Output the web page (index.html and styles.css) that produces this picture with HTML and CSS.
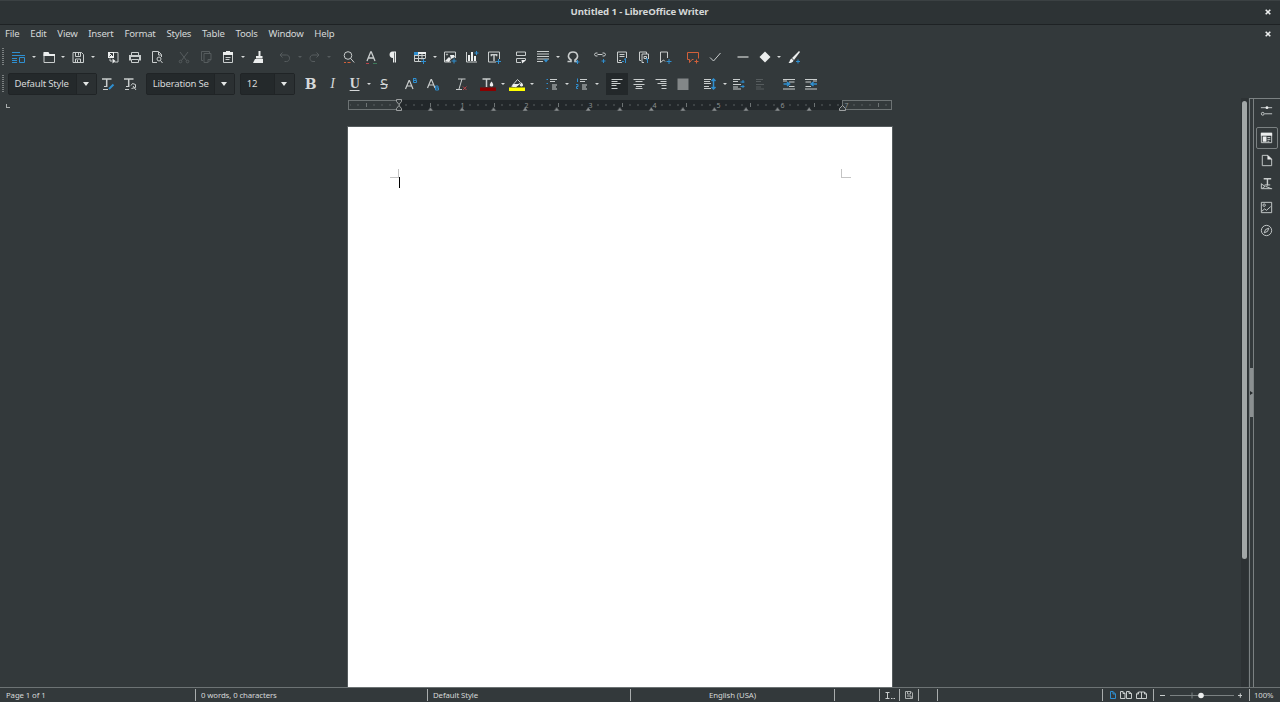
FILE: index.html
```
<!DOCTYPE html>
<html lang="en">
  <head>
    <meta charset="UTF-8" />
    <title>Untitled 1 - LibreOffice Writer</title>
    <link rel="stylesheet" href="styles.css">
  </head>
  <body>
    <div class="titlebar">
      <span class="title">Untitled 1 - LibreOffice Writer</span>
      <svg class="close" viewBox="0 0 6 6"><path d="M.7.7l4.6 4.6M5.3.7L.7 5.3"/></svg>
    </div>

    <div class="menubar">
      <span>File</span><span>Edit</span><span>View</span><span>Insert</span><span>Format</span><span>Styles</span><span>Table</span><span>Tools</span><span>Window</span><span>Help</span>
      <svg class="close" viewBox="0 0 6 6"><path d="M.7.7l4.6 4.6M5.3.7L.7 5.3"/></svg>
    </div>

    <!-- standard toolbar -->
    <div class="toolbar standard">
      <i class="grip"></i>
      <div class="btn"><svg viewBox="0 0 16 16" class="blue"><path d="M1 3.5h8M1 6.500h13M1 9.500h5M1 11.500h5M1 13.500h5M8.500 8.500h5v5h-5z"/></svg></div><i class="drop"></i>
      <div class="btn"><svg viewBox="0 0 16 16"><path d="M3 4.500v9h10.500v-7.500H3"/><path class="fill" d="M2.500 3h5l1 2h5.500v2h-11.500z"/></svg></div><i class="drop"></i>
      <div class="btn"><svg viewBox="0 0 16 16"><path d="M3 3.500h8.500l2 2v8H3zM5.500 4v3.500h5V4M5.500 13v-3h5v3"/><path d="M8.500 4v2.500M7.500 11v2"/></svg></div><i class="drop"></i>
      <i class="sep"></i>
      <div class="btn"><svg viewBox="0 0 16 16"><path d="M8 3.500h5v9.500H9.500M5 9.500v2.500h2"/><path class="fill" d="M3 3h6v6H3z"/><path class="dark" d="M4.500 7.500l3-3M5 4.500h2.500V7"/><path class="fill" d="M7.500 9.500v5l3-2.500z"/></svg></div>
      <div class="btn"><svg viewBox="0 0 16 16"><path d="M4.500 6V3.500h7V6M4.500 10.500h7v3h-7z"/><path d="M3 11.500V7h10v4.500" stroke-width="2"/></svg></div>
      <div class="btn"><svg viewBox="0 0 16 16"><path d="M8 13.500H3.500v-11h6l3 3V8M9.500 3v3h3"/><circle cx="10" cy="10" r="2"/><path d="M11.500 11.500l2 2.500"/></svg></div>
      <i class="sep"></i>
      <div class="btn off"><svg viewBox="0 0 16 16"><path d="M4 3l6.500 8.500M12 3L5.500 11.500"/><circle cx="4.500" cy="12.500" r="1.300"/><circle cx="11.500" cy="12.500" r="1.300"/></svg></div>
      <div class="btn off"><svg viewBox="0 0 16 16"><path d="M5 11.500H3.500v-9h8V4M6 4.500h7v6l-3 3H6zM13 10.500h-3v3"/></svg></div>
      <div class="btn"><svg viewBox="0 0 16 16"><path d="M3.500 4v9.500h9V4zM5.500 8.500h5M5.500 10.500h4"/><path class="fill" d="M3 3h3V2h4v1h3v3H3z"/></svg></div><i class="drop"></i>
      <div class="btn"><svg viewBox="0 0 16 16"><path class="fill" d="M8.500 2h2v5h2v2.500H6V7h2.500zM5 10h8v4H3z"/></svg></div>
      <i class="sep"></i>
      <div class="btn off"><svg viewBox="0 0 16 16"><path d="M5.500 3.500L3 6l2.500 2.500M3 6h6.500c4 0 4 6.500 0 6.500H7.500"/></svg></div><i class="drop dim"></i>
      <div class="btn off"><svg viewBox="0 0 16 16"><path d="M10.500 3.500L13 6l-2.500 2.500M13 6H7c-4 0-4 6.500 0 6.500h2"/></svg></div><i class="drop dim"></i>
      <i class="sep"></i>
      <div class="btn"><svg viewBox="0 0 16 16"><circle cx="7" cy="6.500" r="3.800"/><path d="M9.700 9.500l3.500 4"/><path class="orange" d="M3 13.500h2M6.500 13.500h3"/></svg></div>
      <div class="btn"><svg viewBox="0 0 16 16"><path stroke-width="1.300" d="M4 12L7.700 3h.6L12 12M5.500 9h5"/><path class="red" d="M3 14.500h3"/><path class="green" d="M10 14.500h4"/></svg></div>
      <div class="btn"><svg viewBox="0 0 16 16"><path class="fill" d="M7.500 2.500H11v11h-1V3.500h-.7v10H8V9C3.500 9 3.500 2.500 7.500 2.500z"/></svg></div>
      <i class="sep"></i>
      <div class="btn"><svg viewBox="0 0 16 16"><path class="bluefill" d="M2 3h4v3H2z"/><path d="M2.500 6v6.500H9M2 6.500h11.500M6.500 3.500v9M10 3.500v7M2.500 9.500h11M6.500 3.500h7V9"/><path class="fill" d="M6 3h8v2H6z"/><path class="blue" d="M9 12.500h5M11.500 10v5"/></svg></div><i class="drop"></i>
      <div class="btn"><svg viewBox="0 0 16 16"><path d="M9 13H2.500V3h11v6"/><path class="fill" d="M3 12l4-4 2 2-2 3zM8 6h4l1 2-4 2z"/><circle cx="5" cy="5.500" r=".6"/><path class="blue" d="M9.500 12h5M12 9.500v5"/></svg></div>
      <div class="btn"><svg viewBox="0 0 16 16"><path d="M2.500 3v10h10.500"/><path class="fill" d="M4 6h2v6H4zM7 3h2v9H7zM10 7h2v5h-2z"/><path class="blue" d="M10.500 4h4M12.500 2v4"/></svg></div>
      <div class="btn"><svg viewBox="0 0 16 16"><path d="M10 13H2.500V3h11v7"/><path stroke-width="1.400" d="M5 5.700h6M8 5.500V12M5.300 5v2.200M10.700 5v2.200"/><path class="blue" d="M10 12.500h5M12.500 10v5"/></svg></div>
      <i class="sep"></i>
      <div class="btn"><svg viewBox="0 0 16 16"><path d="M3.500 3v3.500h9V3M3.500 3h9M8 13.500H3.500v-4h9v1.500l-3 2.500"/><path class="fill" d="M8.500 11h4.500L9 14.500z"/></svg></div>
      <div class="btn"><svg viewBox="0 0 16 16"><path d="M2 2.500h12M2 5h12M2 7.500h12M2 10h12M2 12.500h6"/><path class="bluefill" d="M8.500 10.500h5L11 13.500z"/></svg></div><i class="drop"></i>
      <div class="btn"><svg viewBox="0 0 16 16"><path stroke-width="1.600" d="M2.500 12.500h3.500v-1.500C1.500 8 3.500 3 8 3s6.500 5 2 8v1.500H12"/><path class="blue" d="M10.500 13h4M12.500 11v4"/></svg></div>
      <i class="sep"></i>
      <div class="btn"><svg viewBox="0 0 16 16"><path d="M5.500 4H3.500L2.500 5.500l1 1.500h2M10.500 4h2l1 1.500-1 1.500h-2M5.500 5.500h5"/><path class="blue" d="M9.500 12h4M11.500 10v4"/></svg></div>
      <div class="btn"><svg viewBox="0 0 16 16"><path d="M8 13.500H3.500V3h9v6M5.500 5.500h5M5.500 7.500h5M5 11.500h2"/><path class="blue" d="M11.500 14V9.500l-1.500 1M8 12.500h2"/></svg></div>
      <div class="btn"><svg viewBox="0 0 16 16"><path d="M5 11.500H3.500V3h7v2M6 13.500V5h6.500v5M6 13.500h2M8 7.500h2.500v2H8z"/><path class="blue" d="M11.500 14v-4.500l-1.500 1"/></svg></div>
      <div class="btn mark"><svg viewBox="0 0 16 16"><path d="M3.500 13.500V3h7v6M3.500 13.500L6.500 11l1.500 1.500"/><path class="blue" d="M9.500 12.500h5M12 10v5"/></svg></div>
      <i class="sep"></i>
      <div class="btn"><svg viewBox="0 0 16 16" class="orange"><path d="M8.500 10.500H7l-2.500 3v-3h-2v-7h11v6"/><path d="M9.500 12.500h4M11.500 10.500v4"/></svg></div>
      <div class="btn"><svg viewBox="0 0 16 16"><path d="M3 8.500l3.500 3.500L13.500 4"/></svg></div>
      <i class="sep"></i>
      <div class="btn"><svg viewBox="0 0 16 16"><path stroke-width="1.300" d="M2.500 8h11"/></svg></div>
      <div class="btn"><svg viewBox="0 0 16 16"><path class="fill" d="M8 2.500L13.500 8 8 13.500 2.500 8z"/></svg></div><i class="drop"></i>
      <div class="btn"><svg viewBox="0 0 16 16"><path class="fill" d="M13 2l1 1-6 8-2-2zM5.500 9.500l2 2c-.5 2-2.500 2.500-5 2.500 1.500-1 1-3.500 3-4.500z"/><path class="blue" d="M10 12.500h4M12 10.500v4"/></svg></div>
    </div>

    <!-- formatting toolbar -->
    <div class="toolbar formatting">
      <i class="grip"></i>
      <div class="combo"><span>Default Style</span><b></b></div>
      <div class="btn"><svg viewBox="0 0 16 16"><path stroke-width="1.500" d="M2 3h9.500M6.700 3v8"/><path d="M3 13.500h5M4 10.500h3"/><path class="blue" stroke-width="2" d="M9 13l4.500-4.500"/></svg></div>
      <div class="btn"><svg viewBox="0 0 16 16"><path stroke-width="1.500" d="M2 3h9.500M6.700 3v8"/><path d="M3 13.500h4M4 10.500h3M9 9.500l1.500-2 3 1v3l-4 1M11 10l3 4"/></svg></div>
      <i class="sep"></i>
      <div class="combo"><span>Liberation Se</span><b></b></div>
      <div class="combo size"><span>12</span><b></b></div>
      <div class="btn letter bold">B</div>
      <div class="btn letter italic">I</div>
      <div class="btn letter under">U</div><i class="drop"></i>
      <div class="btn letter strike">S</div>
      <i class="sep"></i>
      <div class="btn"><svg viewBox="0 0 16 16"><path stroke-width="1.200" d="M2.500 13L6 4.500h.5L10 13M4 10h5"/><path class="blue" d="M10.500 2v4.500h3v-2h-3M10.500 2.500h2.500v2"/></svg></div>
      <div class="btn"><svg viewBox="0 0 16 16"><path stroke-width="1.200" d="M2.500 12L6 3.500h.5L10 12M4 9h5"/><path class="blue" d="M10.500 10v4h3v-2h-3M10.500 10h2.500v2"/></svg></div>
      <i class="sep"></i>
      <div class="btn"><svg viewBox="0 0 16 16"><path d="M5 3h7.500M9 3L6 13M3 13.500h6"/><path class="red" d="M10 10.500l3.500 3.500M13.500 10.500L10 14"/></svg></div>
      <i class="sep"></i>
      <div class="btn"><svg viewBox="0 0 16 16"><path stroke-width="1.500" d="M2.500 3h8M6.500 3v8"/><path class="fill" d="M11.500 5.500c3 4 1.500 5 0 5s-3-1 0-5z"/><path class="darkred" d="M0 11.500h16V15H0z"/></svg></div><i class="drop"></i>
      <div class="btn"><svg viewBox="0 0 16 16"><path d="M2.500 10.500l6-7 3 3-5 4.500"/><path class="fill" d="M4 8h7l-4 3H3zM12.500 6.500c3 3 1 4 0 4s-3-1 0-4z"/><path class="yellow" d="M0 11.500h16V15H0z"/></svg></div><i class="drop"></i>
      <i class="sep"></i>
      <div class="btn"><svg viewBox="0 0 16 16"><path class="blue" d="M2.500 3.500H4M2.500 7.500H4M2.500 12.500H4"/><path d="M6 3.500h7M6 5.500h5M8 9h5M8 11h4M8 13h5"/></svg></div><i class="drop"></i>
      <div class="btn"><svg viewBox="0 0 16 16"><path class="blue" d="M3.500 2.500V6M2 8.500h2v2H2.500v2H4"/><path d="M6 3.500h7M6 5.500h5M8 9h5M8 11h4M8 13h5"/></svg></div><i class="drop"></i>
      <i class="sep"></i>
      <div class="btn active"><svg viewBox="0 0 16 16"><path d="M2.500 3.500h11M2.500 5.500h6M2.500 7.500h9M2.500 9.500h5M2.500 12.500h6"/></svg></div>
      <div class="btn"><svg viewBox="0 0 16 16"><path d="M2.500 3.500h11M4.500 5.500h7M2.500 8.500h11M5 10.500h6M4.500 12.500h7"/></svg></div>
      <div class="btn"><svg viewBox="0 0 16 16"><path d="M2.500 3.500h11M7.500 5.500h6M4.500 7.500h9M8.500 9.500h5M8.500 12.500h5"/></svg></div>
      <div class="btn"><svg viewBox="0 0 16 16"><path class="greyfill" d="M2.500 2.500h11v11.500h-11z"/></svg></div>
      <i class="sep"></i>
      <div class="btn"><svg viewBox="0 0 16 16"><path d="M2 3.500h7M2 5.500h6M2 7.500h7M2 10.500h5M2 12.500h7"/><path class="blue" stroke-width="1.500" d="M11.500 3v10M9.500 5l2-2 2 2M9.500 11l2 2 2-2"/></svg></div><i class="drop"></i>
      <div class="btn"><svg viewBox="0 0 16 16"><path d="M2 3.500h7M2 5.500h5M2 8.500h8M2 11h5M2 13h8"/><path class="blue" d="M12 4v3M12 9v3M9.500 6h4M9.500 10.500h4"/></svg></div>
      <div class="btn off"><svg viewBox="0 0 16 16"><path d="M3 3.500h7M3 5.500h5M3 8.500h8M3 11h5M3 13h8"/></svg></div>
      <i class="sep"></i>
      <div class="btn"><svg viewBox="0 0 16 16"><path d="M2 3.500h12M8 6h5.500M8 10.500h5.500M2 13h12M2 5h4"/><path class="blue" stroke-width="1.500" d="M2.500 8h6M6 6l2.500 2L6 10"/></svg></div>
      <div class="btn"><svg viewBox="0 0 16 16"><path d="M2 3.500h12M2.500 6h5.500M2.500 10.500h5.500M2 13h12M10 5h4"/><path class="blue" stroke-width="1.500" d="M8 8h6M10.500 6L8 8l2.500 2"/></svg></div>
    </div>

    <div class="main">
      <div class="workspace">
        <i class="tabmark"></i>
        <svg class="ruler" width="546" height="14" viewBox="0 0 546 14">
          <defs>
            <pattern id="ticks" x="51" y="0" width="64" height="14" patternUnits="userSpaceOnUse">
              <path class="dot" d="M7 7h2M15 7h2M23 7h2M39 7h2M47 7h2M55 7h2"/>
              <path class="tick" d="M32.500 5v4"/>
            </pattern>
            <pattern id="tabs" x="67.500" y="0" width="31.550" height="14" patternUnits="userSpaceOnUse">
              <path class="tab" d="M16 9v3M14 12.500l2-2.500 2 2.500z"/>
            </pattern>
          </defs>
          <rect class="track" x="52" y="2" width="444" height="10"/>
          <rect class="margin" x="1.500" y="2.500" width="51" height="9"/>
          <rect class="margin" x="495.500" y="2.500" width="49" height="9"/>
          <rect class="marks" fill="url(#ticks)" x="3" y="0" width="540" height="14"/>
          <rect class="marks" fill="url(#tabs)" x="66" y="0" width="424" height="14"/>
          <g class="numbers"><text x="115.500" y="10">1</text><text x="179.500" y="10">2</text><text x="243.500" y="10">3</text><text x="307.500" y="10">4</text><text x="371.500" y="10">5</text><text x="435.500" y="10">6</text><text x="499.500" y="10">7</text></g>
          <path class="indent" d="M49.500 1.500h5v2l-2.500 3-2.500-3zM49.500 12.500h5v-2l-2.500-3-2.500 3zM492.500 12.500h6v-2l-3-3-3 3z"/>
        </svg>
        <div class="page">
          <i class="corner left"></i>
          <i class="corner right"></i>
          <i class="caret"></i>
        </div>
      </div>
      <div class="scrollbar"><i></i></div>
      <div class="splitter"><i></i></div>
      <div class="sidebar">
        <div class="side"><svg viewBox="0 0 16 16"><path d="M2 5h12M6 11.500h8"/><circle class="fill" cx="8.500" cy="5" r="1.500"/><circle cx="4" cy="11.500" r="1.500"/></svg></div>
        <div class="side selected"><svg viewBox="0 0 16 16"><path d="M2.500 3.500h11v10h-11z"/><path class="fill" d="M2 3h12v3H2zM4 7h4v5.500H4z"/><path d="M9 8h3M9 10h3M9 12h2"/></svg></div>
        <div class="side"><svg viewBox="0 0 16 16"><path d="M3.500 2.500h6l4 4v7h-10z"/><path class="fill" d="M9 2l5 5H9z"/></svg></div>
        <div class="side"><svg viewBox="0 0 16 16"><path stroke-width="1.500" d="M5 3h8M9 3v7"/><path d="M6 9.500h6M2.500 8v5.500h11.500M2.500 8.500l4 2.500-3 2M7 11l6 2.500"/></svg></div>
        <div class="side"><svg viewBox="0 0 16 16"><path d="M2.500 2.500h11v11h-11zM3 12l3-2.500 2 1.500L12.500 7"/><circle cx="5.500" cy="5.500" r="1.300"/></svg></div>
        <div class="side"><svg viewBox="0 0 16 16"><circle cx="8" cy="8" r="5.500"/><path d="M10.500 5.500L9 9l-3.500 1.500L7 7z"/></svg></div>
      </div>
    </div>

    <div class="statusbar">
      <div class="cell pages">Page 1 of 1</div>
      <div class="cell words">0 words, 0 characters</div>
      <div class="cell style">Default Style</div>
      <div class="cell lang">English (USA)</div>
      <div class="cell insert"></div>
      <div class="cell mode"><svg width="11" height="9" viewBox="0 0 11 9"><path d="M.5 1.500h4M2.500 1.500v6M.5 7.500h4M6 7.500h1.500M8.500 7.500H10"/></svg></div>
      <div class="cell saved"><svg width="8" height="8" viewBox="0 0 8 8"><path d="M.5.5h5.500l1.500 1.500v5.500h-7zM2.500 1v2h3V1M2 5h4v2"/></svg></div>
      <div class="cell sign"></div>
      <div class="cell blank"></div>
      <div class="cell views">
        <svg class="blue" width="6" height="8" viewBox="0 0 6 8"><path d="M.5.5h2.500l2.500 2.500v4.500h-5zM3 .5v2.500h2.500"/></svg>
        <svg width="12" height="8" viewBox="0 0 12 8"><path d="M.5.500h2.500l2 2v5H.5zM3 .5v2h2M6.500.5h2.500l2.500 2v5h-5zM9 .5v2h2.500"/></svg>
        <svg width="11" height="8" viewBox="0 0 11 8"><path d="M5.500 1v6.500M.5 7.500V3l2-2h6l2 2v4.500zM2.500 1v2h-2M8.500 1v2h2"/></svg>
      </div>
      <div class="cell zoom">
        <svg width="82" height="9" viewBox="0 0 82 9"><path d="M0 4.500h5M78 4.500h4.500M80.300 2.300v4.500"/><path class="rail" d="M10 4.500h64M32 1.500v6"/><circle class="fill" cx="41" cy="4.500" r="2.800"/></svg>
      </div>
      <div class="cell percent">100%</div>
    </div>
  </body>
</html>
```
FILE: styles.css
```
* {
  box-sizing: border-box;
}
body {
  margin: 0;
  width: 1280px;
  height: 702px;
  overflow: hidden;
  display: flex;
  flex-direction: column;
  background: #33393b;
  color: #d5d8d8;
  font-family: "Noto Sans", sans-serif;
  font-size: 9.6px;
  letter-spacing: -0.22px;
}
svg {
  display: block;
  fill: none;
  stroke: #c9cdcd;
  stroke-width: 1;
}
.fill {
  fill: #eceeee;
  stroke: none;
}
.greyfill {
  fill: #838788;
  stroke: none;
}
.dark {
  stroke: #33393b;
}
.blue {
  stroke: #2f8fd0;
}
.bluefill {
  fill: #2f8fd0;
  stroke: none;
}
.orange {
  stroke: #d2603a;
}
.red {
  stroke: #b8434a;
}
.green {
  stroke: #3d7a5a;
}
.darkred {
  fill: #8b0000;
  stroke: none;
}
.yellow {
  fill: #ffff00;
  stroke: none;
}

.titlebar {
  height: 25px;
  flex: none;
  display: flex;
  align-items: center;
  padding: 0 9px 1px 0;
  background: #2d3335;
  border-top: 1px solid #3b4143;
  border-bottom: 1px solid #1e2224;
}
.title {
  flex: 1;
  padding: 0 0 1px 14px;
  text-align: center;
  font-weight: 700;
  letter-spacing: -0.1px;
}
.close {
  width: 6px;
  height: 6px;
  stroke: #eceeee;
  stroke-width: 1.6;
}
.menubar {
  height: 18px;
  flex: none;
  display: flex;
  align-items: center;
  gap: 10.8px;
  padding: 0 9px 0 5px;
}
.menubar span {
  padding-bottom: 1px;
}
.menubar .close {
  margin-left: auto;
}

.toolbar {
  flex: none;
  display: flex;
  align-items: center;
}
.standard {
  height: 28px;
  padding-bottom: 1px;
}
.formatting {
  height: 27px;
  padding-bottom: 2px;
}
.grip {
  width: 2px;
  height: 18px;
  margin: 0 4px 0 2px;
  background: repeating-linear-gradient(#7b8081 0 1px, #33393b 1px 2px);
}
.btn {
  width: 22px;
  height: 22px;
  flex: none;
  display: flex;
  align-items: center;
  justify-content: center;
}
.btn svg {
  width: 16px;
  height: 16px;
}
.standard .mark {
  padding-right: 2px;
}
.off svg {
  stroke: #565c5e;
}
.active {
  background: #23282a;
}
.drop {
  width: 7.5px;
  flex: none;
}
.drop::before {
  content: "";
  display: block;
  width: 0;
  margin: 0 auto;
  border: 2px solid transparent;
  border-top: 2px solid #d5d8d8;
  border-bottom: 0;
}
.dim::before {
  border-top-color: #565c5e;
}
.sep {
  width: 5.3px;
  flex: none;
}
.combo {
  width: 89px;
  height: 22px;
  flex: none;
  display: flex;
  align-items: center;
  background: #24292b;
  border: 1px solid #202426;
  border-radius: 2px;
}
.combo span {
  flex: 1;
  padding-left: 5.5px;
  white-space: nowrap;
  overflow: hidden;
}
.combo b {
  width: 20px;
  height: 20px;
  flex: none;
  padding: 8px 0 0 6px;
  background: #2b3032;
  border-left: 1px solid #202426;
}
.combo b::before {
  content: "";
  display: block;
  width: 0;
  border: 3px solid transparent;
  border-top: 4px solid #e4e6e6;
  border-bottom: 0;
}
.size {
  width: 55px;
  margin: 0 4.3px 0 5px;
}
.letter {
  font: 14px "Liberation Serif", serif;
}
.bold {
  font: 700 14px "DejaVu Serif", serif;
}
.italic {
  font-style: italic;
}
.under {
  font-weight: 700;
  text-decoration: underline 1px;
  text-underline-offset: 2px;
}
.strike {
  font-family: "Noto Sans", sans-serif;
  text-decoration: line-through 1px;
}

.main {
  flex: 1;
  min-height: 0;
  display: flex;
}
.workspace {
  position: relative;
  width: 1241px;
  display: flex;
  flex-direction: column;
  padding-left: 347px;
  overflow: hidden;
}
.tabmark {
  position: absolute;
  left: 6px;
  top: 6px;
  width: 4px;
  height: 4px;
  border-left: 1px solid #a9adad;
  border-bottom: 1px solid #a9adad;
}
.ruler {
  flex: none;
}
.track {
  fill: #22272a;
  stroke: none;
}
.margin {
  stroke: #6d7374;
}
.marks {
  stroke: none;
}
.dot {
  stroke: #585e60;
}
.tick {
  stroke: #6d7374;
}
.tab {
  fill: #8c9192;
  stroke: #8c9192;
  stroke-width: .5;
}
.numbers {
  fill: #8c9192;
  stroke: none;
  font-size: 7px;
  text-anchor: middle;
}
.indent {
  fill: #33393b;
  stroke: #a9adad;
  stroke-width: .9;
}
.page {
  position: relative;
  flex: 1;
  width: 546px;
  margin-top: 14px;
  background: #fff;
  border: 1px solid #555b5d;
  border-bottom: 0;
}
.corner {
  position: absolute;
  top: 42px;
  width: 9px;
  height: 9px;
  border-bottom: 1px solid #c4c4c4;
}
.left {
  left: 42px;
  border-right: 1px solid #c4c4c4;
}
.right {
  left: 493px;
  width: 10px;
  border-left: 1px solid #c4c4c4;
}
.caret {
  position: absolute;
  left: 50.5px;
  top: 50px;
  width: 1.5px;
  height: 11px;
  background: #000;
}
.scrollbar {
  width: 7px;
  background: #2d3234;
}
.scrollbar i {
  display: block;
  width: 5px;
  height: 458px;
  margin: 3px 0 0 1px;
  border-radius: 3px;
  background: #a2a7a7;
}
.splitter {
  width: 5px;
  margin-left: 1px;
  padding-top: 269px;
  border: solid #7b8182;
  border-width: 1px 1px 0;
}
.splitter i {
  display: flex;
  align-items: center;
  justify-content: center;
  height: 49px;
  background: #8b9091;
}
.splitter i::before {
  content: "";
  border: 2px solid transparent;
  border-left: 3px solid #24292b;
  border-right: 0;
}
.sidebar {
  flex: 1;
  border-top: 1px solid #7b8182;
  padding-left: 1.5px;
}
.side {
  width: 22px;
  height: 23.5px;
  display: flex;
  align-items: center;
  justify-content: center;
}
.side svg {
  width: 15px;
  height: 15px;
}
.selected {
  height: 22px;
  margin: 4px 0 0;
  border: 1px solid #7b8182;
  border-radius: 2px;
}

.statusbar {
  height: 15px;
  flex: none;
  display: flex;
  align-items: center;
  border-top: 1px solid #6d7374;
  font-size: 7.8px;
  letter-spacing: -0.1px;
  white-space: nowrap;
}
.cell {
  height: 12px;
  flex: none;
  display: flex;
  align-items: center;
  padding-left: 5px;
  border-right: 1px solid #a9adad;
}
.pages {
  width: 196px;
  padding-left: 6px;
}
.words {
  width: 232px;
}
.style {
  width: 203px;
}
.lang {
  width: 204px;
  padding: 0;
  justify-content: center;
}
.insert {
  width: 45px;
}
.mode {
  width: 20px;
}
.saved {
  width: 19px;
}
.saved svg {
  opacity: .8;
}
.sign {
  width: 19px;
}
.blank {
  width: 165px;
}
.views {
  width: 51px;
  padding-left: 7px;
  gap: 4px;
}
.zoom {
  width: 96px;
  padding-left: 6px;
}
.rail {
  stroke: #7b8182;
}
.percent {
  padding-left: 4px;
  border-right: 0;
}
```
